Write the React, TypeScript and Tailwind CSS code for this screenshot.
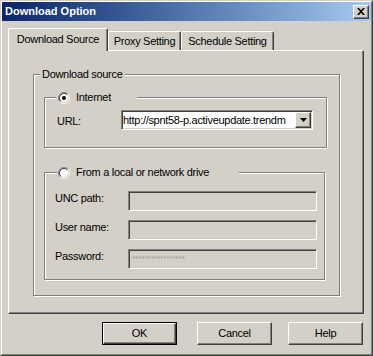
import React from "react";

function Radio({ checked }: { checked?: boolean }) {
  return (
    <svg width="12" height="12" viewBox="0 0 12 12" className="block shrink-0">
      <circle cx="6" cy="6" r="4.5" fill="#fff" />
      <path d="M2.11 9.89 A5.5 5.5 0 0 1 9.89 2.11" fill="none" stroke="#808080" />
      <path d="M9.89 2.11 A5.5 5.5 0 0 1 2.11 9.89" fill="none" stroke="#fff" />
      <path d="M2.82 9.18 A4.5 4.5 0 0 1 9.18 2.82" fill="none" stroke="#404040" />
      <path d="M9.18 2.82 A4.5 4.5 0 0 1 2.82 9.18" fill="none" stroke="#d4d0c8" />
      {checked && <circle cx="6" cy="6" r="2" fill="#000" />}
    </svg>
  );
}

const sunken =
  "border border-t-[#808080] border-l-[#808080] border-b-white border-r-white shadow-[inset_1px_1px_0_#404040,inset_-1px_-1px_0_#d4d0c8]";
const raised =
  "border border-t-white border-l-white border-b-[#404040] border-r-[#404040] shadow-[inset_-1px_-1px_0_#808080]";
const group =
  "border border-[#808080] shadow-[1px_1px_0_#fff,inset_1px_1px_0_#fff]";

function Field({ label, children }: { label: string; children?: React.ReactNode }) {
  return (
    <div className="flex items-start">
      <div className="w-[73px] leading-[13px] pt-[1px]">{label}</div>
      <div className={`w-[189px] h-[20px] bg-[#d4d0c8] flex items-center pl-[3px] ${sunken}`}>
        {children}
      </div>
    </div>
  );
}

function Button({ label, def, className }: { label: string; def?: boolean; className?: string }) {
  if (def) {
    return (
      <div className={`w-[75px] h-[23px] border border-black ${className ?? ""}`}>
        <div className={`w-full h-full flex items-center justify-center ${raised}`}>{label}</div>
      </div>
    );
  }
  return (
    <div className={`w-[75px] h-[23px] flex items-center justify-center ${raised} ${className ?? ""}`}>
      {label}
    </div>
  );
}

export default function App() {
  return (
    <div className="w-[373px] h-[356px] bg-[#d4d0c8] border border-t-[#d4d0c8] border-l-[#d4d0c8] border-b-[#404040] border-r-[#404040] font-['Liberation_Sans',Arial,sans-serif] text-[11px] text-black">
      <div className="w-full h-full flex flex-col border border-t-white border-l-white border-b-[#808080] border-r-[#808080]">
        {/* Title bar */}
        <div className="h-[19px] shrink-0 flex items-center justify-between pl-[3px] pr-[2px] bg-gradient-to-r from-[#0a246a] to-[#a6caf0]">
          <span className="text-white font-bold text-[11px] leading-[13px]">Download Option</span>
          <div className={`w-[16px] h-[14px] bg-[#d4d0c8] flex items-center justify-center ${raised}`}>
            <svg width="8" height="7" viewBox="0 0 8 7" className="block">
              <path d="M0 0 L2 0 L4 2.3 L6 0 L8 0 L5 3.5 L8 7 L6 7 L4 4.7 L2 7 L0 7 L3 3.5 Z" fill="#000" />
            </svg>
          </div>
        </div>

        {/* Body */}
        <div className="flex-1 flex flex-col pl-[6px] pr-[7px] pt-[7px] tracking-[-0.3px]">
          {/* Tabs */}
          <div className="flex items-end h-[22px] shrink-0">
            <div className="relative z-10 -mb-px h-[23px] w-[100px] bg-[#d4d0c8] rounded-t-[2px] border-t border-l border-white border-r border-r-[#404040] shadow-[inset_-1px_0_0_#808080] flex items-center justify-center pb-[2px]">
              Download Source
            </div>
            <div className="h-[19px] w-[73px] rounded-t-[2px] border-t border-l border-white border-r border-r-[#404040] shadow-[inset_-1px_0_0_#808080] flex items-center justify-center">
              Proxy Setting
            </div>
            <div className="h-[19px] w-[93px] rounded-t-[2px] border-t border-l border-white border-r border-r-[#404040] shadow-[inset_-1px_0_0_#808080] flex items-center justify-center">
              Schedule Setting
            </div>
          </div>

          {/* Panel */}
          <div className="h-[264px] shrink-0 border-t border-l border-white border-r border-b border-r-[#404040] border-b-[#404040] shadow-[inset_-1px_-1px_0_#808080] pl-[24px] pt-[17px]">
            <fieldset className={`w-[307px] ${group} pb-[15px]`}>
              <legend className="ml-[6px] px-[2px] leading-[13px] bg-[#d4d0c8]">Download source</legend>

              {/* Internet group */}
              <fieldset className={`ml-[10px] mt-[10px] w-[283px] ${group} pb-[17px]`}>
                <legend className="ml-[11px] w-[81px] h-[13px] flex items-center bg-[#d4d0c8]">
                  <span className="ml-[2px]">
                    <Radio checked />
                  </span>
                  <span className="ml-[6px] leading-[13px]">Internet</span>
                </legend>
                <div className="mt-[6px] pl-[12px] flex items-start">
                  <div className="w-[64px] leading-[13px] mt-[5px]">URL:</div>
                  <div className={`w-[192px] h-[20px] bg-white flex items-center ${sunken}`}>
                    <div className="flex-1 min-w-0 overflow-hidden whitespace-nowrap pl-[1px] leading-[13px]">
                      http://spnt58-p.activeupdate.trendm
                    </div>
                    <div className={`w-[16px] h-[16px] mr-[1px] bg-[#d4d0c8] flex items-center justify-center shrink-0 ${raised}`}>
                      <svg width="7" height="4" viewBox="0 0 7 4" className="block">
                        <path d="M0 0 L7 0 L3.5 4 Z" fill="#000" />
                      </svg>
                    </div>
                  </div>
                </div>
              </fieldset>

              {/* Local group */}
              <fieldset className={`ml-[10px] mt-[18px] w-[281px] ${group} pb-[10px]`}>
                <legend className="ml-[12px] w-[182px] h-[13px] flex items-center bg-[#d4d0c8]">
                  <span className="ml-[1px]">
                    <Radio />
                  </span>
                  <span className="ml-[6px] leading-[13px] whitespace-nowrap">From a local or network drive</span>
                </legend>
                <div className="mt-[12px] pl-[10px] flex flex-col gap-[9px]">
                  <Field label="UNC path:" />
                  <Field label="User name:" />
                  <Field label="Password:">
                    <span className="text-[8px] leading-[8px] text-[#9a9a9a] tracking-[0px]">*****************</span>
                  </Field>
                </div>
              </fieldset>
            </fieldset>
          </div>

          {/* Buttons */}
          <div className="mt-[8px] flex justify-end">
            <Button label="OK" def className="mr-[20px]" />
            <Button label="Cancel" className="mr-[16px]" />
            <Button label="Help" className="mr-[1px]" />
          </div>
        </div>
      </div>
    </div>
  );
}
